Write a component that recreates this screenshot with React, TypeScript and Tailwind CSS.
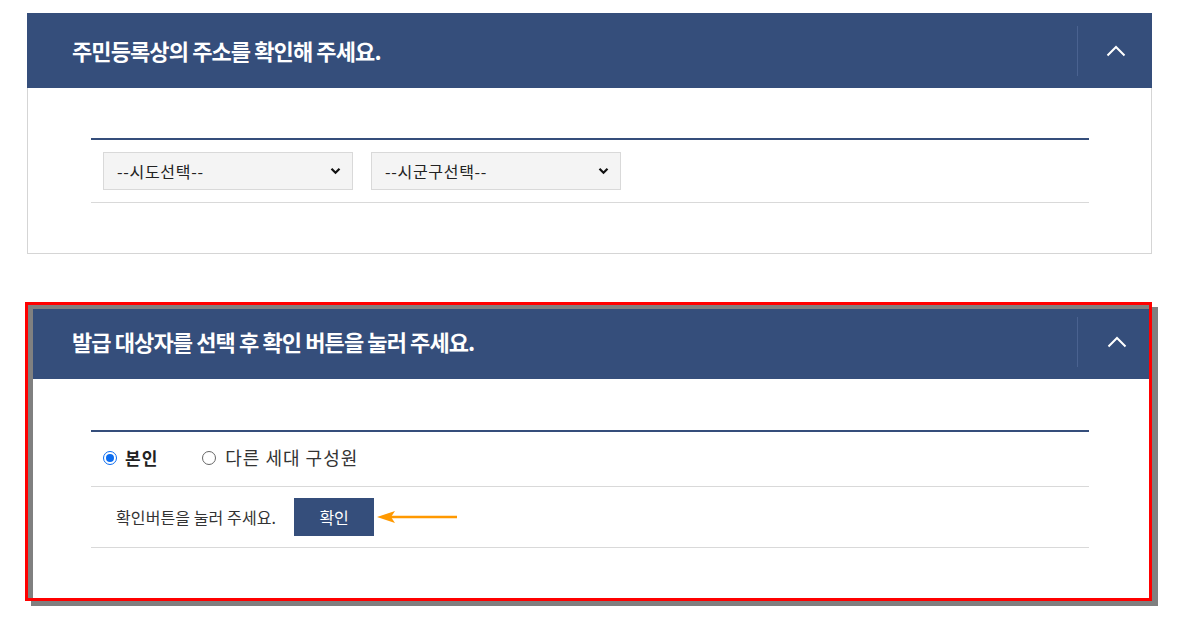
import React from "react";

const FONT = { fontFamily: '"Noto Sans CJK KR", "Noto Sans", sans-serif' };

function ChevronUp() {
  return (
    <svg width="20" height="12" viewBox="0 0 20 12" fill="none">
      <polyline points="1.5,10.5 10,2 18.5,10.5" stroke="#ffffff" strokeWidth="2" />
    </svg>
  );
}

function SelectBox({ label }: { label: string }) {
  return (
    <div className="flex h-[38px] w-[250px] items-center justify-between border border-[#d9d9d9] bg-[#f4f4f4] pl-[13px] pr-[11px] text-[16px] tracking-[0.7px] text-[#222]">
      <span>{label}</span>
      <svg width="11" height="8" viewBox="0 0 11 8" fill="none">
        <polyline points="1.5,1.8 5.5,5.8 9.5,1.8" stroke="#111" strokeWidth="2.2" />
      </svg>
    </div>
  );
}

function Radio({ checked }: { checked: boolean }) {
  return checked ? (
    <span className="flex h-[14px] w-[14px] shrink-0 items-center justify-center rounded-full border-[1.5px] border-[#0b6cf0] bg-white">
      <span className="block h-[8px] w-[8px] rounded-full bg-[#0b6cf0]" />
    </span>
  ) : (
    <span className="block h-[14px] w-[14px] shrink-0 rounded-full border border-[#666] bg-white" />
  );
}

export default function App() {
  return (
    <div className="h-[623px] w-[1179px] overflow-hidden bg-white pt-[13px]" style={FONT}>
      {/* Panel 1 */}
      <div className="ml-[27px] w-[1125px]">
        <div className="flex h-[75px] items-center bg-[#354e7b] pl-[45px]">
          <h2 className="flex-1 text-[22px] font-bold tracking-[-0.9px] text-white">
            주민등록상의 주소를 확인해 주세요.
          </h2>
          <div className="flex h-[50px] w-[75px] items-center justify-center border-l border-[#4a6290] pl-[2px]">
            <ChevronUp />
          </div>
        </div>
        <div className="border-x border-b border-[#d5d5d5] pb-[50px] pl-[63px] pr-[62px] pt-[50px]">
          <div className="border-t-2 border-[#354e7b]">
            <div className="flex gap-[18px] border-b border-[#d9d9d9] py-[12px] pl-[12px]">
              <SelectBox label="--시도선택--" />
              <SelectBox label="--시군구선택--" />
            </div>
          </div>
        </div>
      </div>

      {/* Panel 2 */}
      <div className="ml-[25px] mt-[48px] w-[1127px] border-[3px] border-[#ff0000] shadow-[6px_5px_0_#808080]">
        <div className="border-l-[5px] border-t-[4px] border-[#808080]">
          <div className="flex h-[70px] items-center bg-[#354e7b] pb-[5px] pl-[39px]">
            <h2 className="flex-1 text-[22px] font-bold tracking-[-0.9px] text-white">
              발급 대상자를 선택 후 확인 버튼을 눌러 주세요.
            </h2>
            <div className="flex h-[50px] w-[72px] items-center justify-center border-l border-[#4a6290] pl-[6px]">
              <ChevronUp />
            </div>
          </div>
          <div className="bg-white pb-[50px] pl-[58px] pr-[60px] pt-[51px]">
            <div className="border-t-2 border-[#354e7b]">
              <div className="flex h-[55px] items-center border-b border-[#d9d9d9] pb-[3px] pl-[12px] text-[#333]">
                <Radio checked />
                <span className="ml-[8px] text-[17px] font-bold tracking-[1px] text-[#222]">본인</span>
                <span className="ml-[44px] flex">
                  <Radio checked={false} />
                </span>
                <span className="ml-[9px] text-[18px] tracking-[1px]">다른 세대 구성원</span>
              </div>
              <div className="flex h-[61px] items-center border-b border-[#d9d9d9] pl-[25px]">
                <span className="text-[16px] tracking-[0.1px] text-[#333]">확인버튼을 눌러 주세요.</span>
                <button className="ml-[18px] flex h-[38px] w-[80px] items-center justify-center bg-[#354e7b] text-[16px] text-white">
                  확인
                </button>
                <svg className="ml-[2px]" width="82" height="14" viewBox="0 0 82 14" fill="none">
                  <line x1="10" y1="7" x2="81" y2="7" stroke="#ff9900" strokeWidth="2.5" />
                  <polygon points="1,7 19,1 15,7 19,13" fill="#ff9900" />
                </svg>
              </div>
            </div>
          </div>
        </div>
      </div>
    </div>
  );
}
